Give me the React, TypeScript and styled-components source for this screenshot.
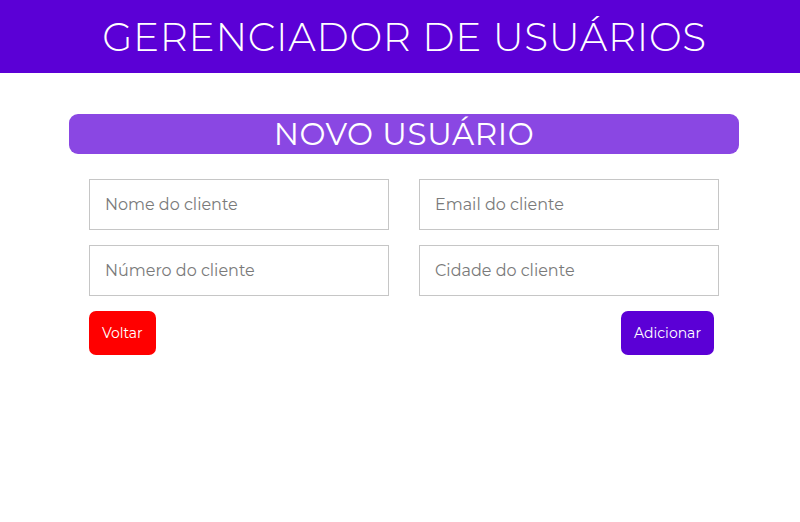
import React from "react";
import styled, { createGlobalStyle } from "styled-components";

const Global = createGlobalStyle`
  html, body { margin: 0; padding: 0; background: #ffffff; }
  body { font-family: "Montserrat", "Inter", "Noto Sans", sans-serif; }
  * { box-sizing: border-box; }
`;

const Header = styled.header`
  height: 73px;
  background: #5b00d6;
  display: flex;
  align-items: center;
  justify-content: center;
  padding-left: 9px;
`;

const Title = styled.h1`
  margin: 0;
  color: #ffffff;
  font-weight: 300;
  font-size: 39px;
  letter-spacing: 0.7px;
`;

const Main = styled.main`
  width: 670px;
  margin: 41px 0 0 69px;
`;

const CardTitle = styled.h2`
  margin: 0;
  height: 40px;
  border-radius: 9px;
  background: #8a47e3;
  color: #ffffff;
  font-weight: 400;
  font-size: 31px;
  letter-spacing: 0.6px;
  display: flex;
  align-items: center;
  justify-content: center;
`;

const Form = styled.form`
  padding: 25px 20px 0;
`;

const Grid = styled.div`
  display: grid;
  grid-template-columns: 300px 300px;
  column-gap: 30px;
  row-gap: 15px;
`;

const Input = styled.input`
  height: 51px;
  border: 1px solid #c6c6c6;
  padding: 0 15px;
  font-family: inherit;
  font-size: 16px;
  color: #333;
  outline: none;
  &::placeholder { color: #7a7a7a; }
`;

const Actions = styled.div`
  display: flex;
  justify-content: space-between;
  margin-top: 15px;
  padding-right: 5px;
`;

const Button = styled.button<{ $variant: "back" | "add" }>`
  height: 44px;
  padding: 0 13px;
  border: none;
  border-radius: 7px;
  background: ${(p) => (p.$variant === "back" ? "#ff0000" : "#5b00d6")};
  color: #ffffff;
  font-family: inherit;
  font-size: 14px;
  cursor: pointer;
`;

export default function App() {
  return (
    <>
      <Global />
      <Header>
        <Title>GERENCIADOR DE USUÁRIOS</Title>
      </Header>
      <Main>
        <CardTitle>NOVO USUÁRIO</CardTitle>
        <Form onSubmit={(e) => e.preventDefault()}>
          <Grid>
            <Input placeholder="Nome do cliente" />
            <Input placeholder="Email do cliente" />
            <Input placeholder="Número do cliente" />
            <Input placeholder="Cidade do cliente" />
          </Grid>
          <Actions>
            <Button type="button" $variant="back">Voltar</Button>
            <Button type="submit" $variant="add">Adicionar</Button>
          </Actions>
        </Form>
      </Main>
    </>
  );
}
